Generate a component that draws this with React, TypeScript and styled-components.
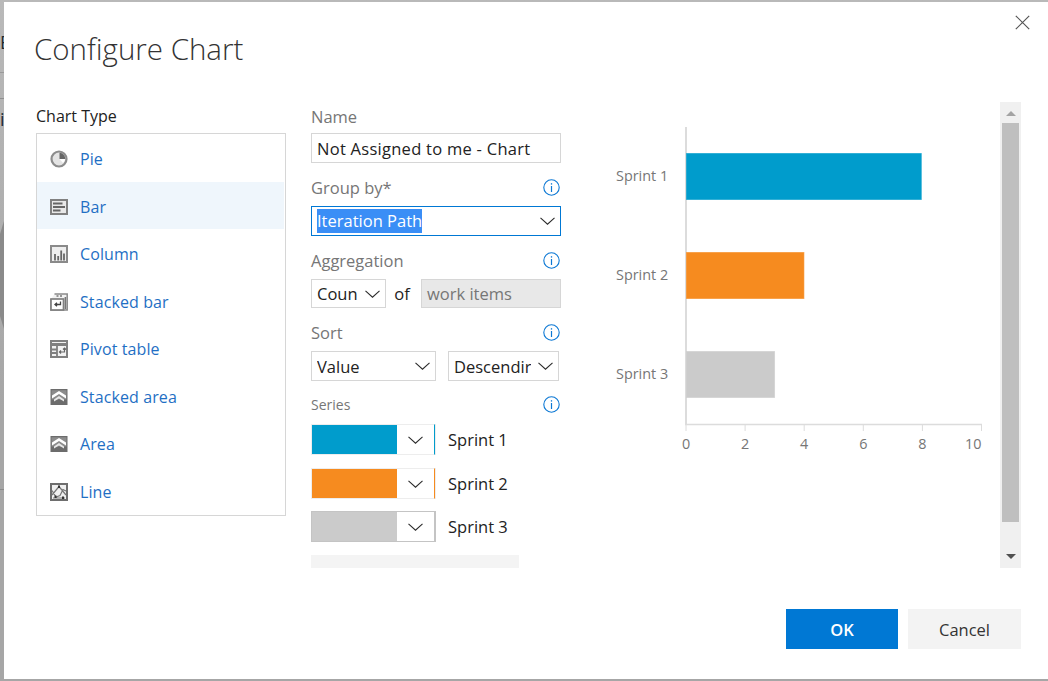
import React from 'react';
import styled, { createGlobalStyle } from 'styled-components';

const FONT = '"Open Sans", "Noto Sans", "Liberation Sans", sans-serif';

const GlobalStyle = createGlobalStyle`
	html, body {
		margin: 0;
		padding: 0;
		background: #a8a8a8;
		overflow: hidden;
	}
	* {
		box-sizing: border-box;
	}
`;

const Page = styled.div`
	display: flex;
	width: 1048px;
	height: 681px;
	font-family: ${FONT};
	background: linear-gradient(#b9b9b9, #a6a6a6 60%);
`;

const BackdropStrip = styled.div`
	display: flex;
	flex-direction: column;
	flex: 0 0 4px;
	overflow: hidden;
	background:
		linear-gradient(#9a9a9a, #9a9a9a) 0 72px / 100% 1px no-repeat,
		linear-gradient(#8f8f8f, #8f8f8f) 0 98px / 100% 1px no-repeat,
		linear-gradient(#8a8a8a, #8a8a8a) 0 489px / 100% 1px no-repeat;
`;

const BackdropGlyph = styled.span<{ $top: number }>`
	display: block;
	margin-top: ${(p) => p.$top}px;
	height: 18px;
	font-size: 18px;
	line-height: 18px;
	white-space: nowrap;
	color: #1d2a33;
`;

const BackdropPatch = styled.div`
	margin-top: 93px;
	height: 108px;
	background: #8a8a8a;
	clip-path: polygon(100% 0, 100% 100%, 0 88%, 0 12%);
`;

const Dialog = styled.div`
	position: relative;
	flex: 1;
	display: flex;
	flex-direction: column;
	margin: 2px 0 2px;
	background: #fff;
	color: #222;
`;

const CloseButton = styled.button`
	position: absolute;
	top: 13px;
	right: 18px;
	display: flex;
	padding: 0;
	border: 0;
	background: none;
`;

const Title = styled.h1`
	height: 100px;
	margin: 0;
	padding: 25px 0 0 30px;
	font-size: 29.5px;
	line-height: 44px;
	font-weight: 300;
	color: #333;
`;

const Body = styled.div`
	display: flex;
	height: 466px;
	padding: 0 27px 0 32px;
`;

const TypeColumn = styled.div`
	flex: 0 0 250px;
	margin-right: 25px;
`;

const TypeLabel = styled.div`
	height: 31px;
	font-size: 16px;
	line-height: 28px;
	color: #222;
`;

const TypeList = styled.div`
	display: grid;
	grid-template-rows: repeat(8, 47.5px);
	height: 383px;
	padding: 0 1px 0 0;
	border: 1px solid #d6d6d6;
`;

const TypeItem = styled.div<{ $selected?: boolean }>`
	display: flex;
	align-items: center;
	padding: 3px 0 0 13px;
	gap: 12px;
	font-size: 16px;
	letter-spacing: 0.1px;
	color: #1f6fc4;
	background: ${(p) => (p.$selected ? '#eff6fc' : 'transparent')};
`;

const FormColumn = styled.div`
	display: flex;
	flex-direction: column;
	flex: 0 0 250px;
`;

const FieldHead = styled.div<{ $height: number; $shift: number }>`
	display: flex;
	align-items: center;
	justify-content: space-between;
	height: ${(p) => p.$height}px;
	padding: ${(p) => (p.$shift > 0 ? p.$shift : 0)}px 1px ${(p) => (p.$shift < 0 ? -p.$shift : 0)}px 0;
	font-size: 16.5px;
	color: #767676;
`;

const SeriesHead = styled(FieldHead)`
	font-size: 14px;
`;

const TextField = styled.div<{ $disabled?: boolean; $spacing?: number }>`
	display: flex;
	align-items: center;
	flex: 1;
	height: 100%;
	min-width: 0;
	padding-left: 5px;
	border: 1px solid #d6d6d6;
	font-size: 16.5px;
	letter-spacing: ${(p) => p.$spacing ?? 0}px;
	white-space: nowrap;
	color: ${(p) => (p.$disabled ? '#767676' : '#222')};
	background: ${(p) => (p.$disabled ? '#e8e8e8' : '#fff')};
`;

const FieldRow = styled.div`
	display: flex;
	align-items: center;
	height: 30px;
`;

const AggregationRow = styled(FieldRow)`
	height: 29px;
`;

const SortRow = styled(FieldRow)`
	gap: 12px;
`;

const Dropdown = styled.div<{ $width?: number; $focused?: boolean }>`
	display: flex;
	align-items: center;
	justify-content: space-between;
	flex: ${(p) => (p.$width ? `0 0 ${p.$width}px` : '1')};
	height: 100%;
	min-width: 0;
	padding: 0 5px 0 5px;
	border: 1px solid ${(p) => (p.$focused ? '#0078d4' : '#d6d6d6')};
	font-size: 16.5px;
	white-space: nowrap;
	color: #222;
`;

const DropdownValue = styled.span`
	min-width: 0;
	overflow: hidden;
`;

const SelectedText = styled.span`
	display: inline-block;
	line-height: 24px;
	color: #fff;
	background: #3a8ef6;
`;

const OfLabel = styled.span`
	flex: 0 0 35px;
	padding-right: 3px;
	font-size: 16.5px;
	text-align: center;
	color: #222;
`;

const SeriesRow = styled.div<{ $gap: number }>`
	display: flex;
	align-items: center;
	height: 31px;
	margin-bottom: ${(p) => p.$gap}px;
	font-size: 16.5px;
	line-height: 29px;
	color: #222;
`;

const ColorPicker = styled.div<{ $color: string; $dark?: boolean }>`
	display: flex;
	flex: 0 0 124px;
	height: 100%;
	margin-right: 13px;
	border: ${(p) => (p.$dark ? '1px solid #c4c4c4' : '1px solid #ededed')};
	border-right: 1px solid ${(p) => p.$color};
	box-shadow: 1px 0 0 ${(p) => (p.$dark ? '#c4c4c4' : '#ededed')};
`;

const ColorSwatch = styled.div<{ $color: string }>`
	flex: 0 0 85px;
	background: ${(p) => p.$color};
`;

const ColorArrow = styled.div`
	display: flex;
	align-items: center;
	justify-content: center;
	flex: 1;
	background: #fff;
`;

const ClippedField = styled.div`
	width: 208px;
	height: 13px;
	background: #f4f4f4;
`;

const ChartArea = styled.div`
	flex: 0 0 400px;
	margin-left: 39px;
`;

const AxisLabel = styled.text`
	font-family: ${FONT};
	font-size: 14.4px;
	fill: #767676;
`;

const ScrollTrack = styled.div`
	display: flex;
	flex-direction: column;
	align-items: center;
	flex: 0 0 21px;
	background: #f0f0f0;
`;

const ScrollArrow = styled.div<{ $up?: boolean }>`
	display: flex;
	align-items: ${(p) => (p.$up ? 'center' : 'flex-end')};
	justify-content: center;
	flex: ${(p) => (p.$up ? '0 0 21px' : '1')};
	padding: ${(p) => (p.$up ? '2px 0 0' : '0 0 9px')};
	&::before {
		content: '';
		border-left: 5px solid transparent;
		border-right: 5px solid transparent;
		${(p) =>
			p.$up
				? 'border-bottom: 5px solid #a3a3a3;'
				: 'border-top: 5px solid #505050;'}
	}
`;

const ScrollThumb = styled.div`
	flex: 0 0 399px;
	width: 17px;
	background: #bfbfbf;
`;

const Footer = styled.div`
	display: flex;
	justify-content: flex-end;
	gap: 10px;
	padding: 41px 27px 0 0;
`;

const ActionButton = styled.button<{ $primary?: boolean }>`
	width: ${(p) => (p.$primary ? 112 : 113)}px;
	height: 40px;
	padding: 0;
	border: 0;
	font-family: ${FONT};
	font-size: 16.5px;
	font-weight: ${(p) => (p.$primary ? 600 : 400)};
	color: ${(p) => (p.$primary ? '#fff' : '#333')};
	background: ${(p) => (p.$primary ? '#0078d4' : '#f3f3f3')};
`;

const Chevron = () => (
	<svg width="15" height="8" viewBox="0 0 15 8" fill="none">
		<path d="M.5.8 7.5 7.2 14.5.8" stroke="#2b2b2b" strokeWidth="1.1" />
	</svg>
);

const InfoIcon = () => (
	<svg width="17" height="17" viewBox="0 0 17 17" fill="none">
		<circle cx="8.5" cy="8.5" r="7.7" stroke="#0c78d4" strokeWidth="1.1" />
		<path d="M8.5 7v6" stroke="#0c78d4" strokeWidth="1.2" />
		<path d="M8.5 4.2v1.4" stroke="#0c78d4" strokeWidth="1.3" />
	</svg>
);

const AREA_ICON = (
	<>
		<rect x=".5" y="1" width="17" height="16" fill="#6c6c6c" />
		<path d="M1.5 2.2h15v9.3H1.5Z" fill="#8c8c8c" />
		<path d="M2 7.5 9 3l7 4.5v3L9 6 2 10.500Z" fill="#fff" />
		<path d="M4 11.500 9 8l5 3.500v2L9 10.500 4 13.500Z" fill="#e8e8e8" />
	</>
);

const CHART_ICONS: Record<string, React.ReactNode> = {
	Pie: (
		<>
			<circle cx="9" cy="9" r="7.5" fill="#e4e4e4" stroke="#8c8c8c" strokeWidth="2.2" />
			<path d="M9.5 9V2.8a6.2 6.2 0 0 1 5.8 6.2Z" fill="#666" />
			<path d="M9.5 9h5.500a6 6 0 0 1-2 4Z" fill="#fff" />
		</>
	),
	Bar: (
		<>
			<rect x="1" y="2" width="16" height="14" fill="#e8e8e8" stroke="#808080" strokeWidth="2" />
			<path d="M3 5.5h9.5M3 9h12M3 12.5h7.5" stroke="#666" strokeWidth="2" />
		</>
	),
	Column: (
		<>
			<rect x="1" y="1" width="16" height="16" fill="#eee" stroke="#8a8a8a" strokeWidth="2" />
			<path d="M5 15.5V9M8.2 15.5V11M11.2 15.5V5.5M14 15.5V8.5" stroke="#666" strokeWidth="1.8" />
		</>
	),
	'Stacked bar': (
		<>
			<path d="M4.5 1h12.7v16H1V6" fill="#f2f2f2" stroke="#8a8a8a" strokeWidth="1.5" />
			<rect x="1" y="6" width="12.5" height="11" fill="#fff" stroke="#808080" strokeWidth="1.7" />
			<path d="M6.5 3h2M10 3h2M15.4 4v12" stroke="#777" strokeWidth="1.6" />
			<path d="M10.5 8.5v3H5M7 9.8 5 11.5 7 13.2" fill="none" stroke="#444" strokeWidth="1.3" />
		</>
	),
	'Pivot table': (
		<>
			<rect x="1" y="1" width="16" height="16" fill="#f2f2f2" stroke="#808080" strokeWidth="2" />
			<path d="M1 4.5h16" stroke="#808080" strokeWidth="3" />
			<path d="M7 4v12M2 9.5h5M2 13h5" stroke="#808080" strokeWidth="1.8" />
			<path d="M14.5 8v4H9.5M11 10.5 9.5 12 11 13.5M13 9.5 14.5 8 16 9.5" fill="none" stroke="#666" strokeWidth="1.2" />
		</>
	),
	'Stacked area': AREA_ICON,
	Area: AREA_ICON,
	Line: (
		<>
			<rect x="1" y="1" width="16" height="16" fill="#f0f0f0" stroke="#6e6e6e" strokeWidth="2" />
			<path d="M2 12 9 3.5 16 12M2 7.5l4 6.5 4-1.500 3-6 3 1.500M3 15h12" fill="none" stroke="#777" strokeWidth="1.2" />
			<path d="M9 2.5v2.500M5.500 12.500v2.500M13 13.500v2.500" stroke="#333" strokeWidth="2" />
		</>
	),
};

const CHART_TYPES = ['Pie', 'Bar', 'Column', 'Stacked bar', 'Pivot table', 'Stacked area', 'Area', 'Line'];

const SERIES = [
	{ name: 'Sprint 1', color: '#009ccc', gap: 13, value: 8 },
	{ name: 'Sprint 2', color: '#f68b1f', gap: 12, value: 4 },
	{ name: 'Sprint 3', color: '#cbcbcb', gap: 13, value: 3 },
];

const TICKS = [0, 2, 4, 6, 8, 10];

const BarChart = () => (
	<svg width="400" height="466" viewBox="600 102 400 466">
		<path d="M686 127v297" stroke="#dcdcdc" strokeWidth="2" />
		<path d="M685 424.5h297" stroke="#dcdcdc" strokeWidth="1.5" />
		{TICKS.map((tick) => (
			<React.Fragment key={tick}>
				<path d={`M${686 + tick * 29.55} 424v7`} stroke="#dcdcdc" />
				<AxisLabel x={686 + tick * 29.55} y={449} textAnchor={tick === 10 ? 'end' : 'middle'}>
					{tick}
				</AxisLabel>
			</React.Fragment>
		))}
		{SERIES.map((series, index) => {
			const top = 153.5 + index * 99;
			return (
				<React.Fragment key={series.name}>
					<rect x={686.5} y={top} width={series.value * 29.35} height={46} fill={series.color} stroke={series.color} strokeOpacity={0.6} />
					<AxisLabel x={616} y={top + 27.5}>
						{series.name}
					</AxisLabel>
				</React.Fragment>
			);
		})}
	</svg>
);

const App = () => (
	<Page>
		<GlobalStyle />
		<BackdropStrip>
			<BackdropGlyph $top={33}>E</BackdropGlyph>
			<BackdropGlyph $top={59}>i</BackdropGlyph>
			<BackdropPatch />
		</BackdropStrip>
		<Dialog>
			<CloseButton aria-label="Close">
				<svg width="15" height="15" viewBox="0 0 15 15" fill="none">
					<path d="M.8.8 14.2 14.2M14.2.8.8 14.2" stroke="#555" strokeWidth="1.2" />
				</svg>
			</CloseButton>
			<Title>Configure Chart</Title>
			<Body>
				<TypeColumn>
					<TypeLabel>Chart Type</TypeLabel>
					<TypeList>
						{CHART_TYPES.map((type) => (
							<TypeItem key={type} $selected={type === 'Bar'}>
								<svg width="18" height="18" viewBox="0 0 18 18">
									{CHART_ICONS[type]}
								</svg>
								{type}
							</TypeItem>
						))}
					</TypeList>
				</TypeColumn>
				<FormColumn>
					<FieldHead $height={31} $shift={-3}>Name</FieldHead>
					<FieldRow>
						<TextField $spacing={0.27}>Not Assigned to me - Chart</TextField>
					</FieldRow>
					<FieldHead $height={43} $shift={6}>
						Group by*
						<InfoIcon />
					</FieldHead>
					<FieldRow>
						<Dropdown $focused>
							<SelectedText>Iteration Path</SelectedText>
							<Chevron />
						</Dropdown>
					</FieldRow>
					<FieldHead $height={43} $shift={6}>
						Aggregation
						<InfoIcon />
					</FieldHead>
					<AggregationRow>
						<Dropdown $width={75}>
							<DropdownValue>Coun</DropdownValue>
							<Chevron />
						</Dropdown>
						<OfLabel>of</OfLabel>
						<TextField $disabled>work items</TextField>
					</AggregationRow>
					<FieldHead $height={43} $shift={5}>
						Sort
						<InfoIcon />
					</FieldHead>
					<SortRow>
						<Dropdown $width={125}>
							<DropdownValue>Value</DropdownValue>
							<Chevron />
						</Dropdown>
						<Dropdown $width={111}>
							<DropdownValue>Descendir</DropdownValue>
							<Chevron />
						</Dropdown>
					</SortRow>
					<SeriesHead $height={43} $shift={4}>
						Series
						<InfoIcon />
					</SeriesHead>
					{SERIES.map((series, index) => (
						<SeriesRow key={series.name} $gap={series.gap}>
							<ColorPicker $color={index === 2 ? '#c4c4c4' : series.color} $dark={index === 2}>
								<ColorSwatch $color={series.color} />
								<ColorArrow>
									<Chevron />
								</ColorArrow>
							</ColorPicker>
							{series.name}
						</SeriesRow>
					))}
					<ClippedField />
				</FormColumn>
				<ChartArea>
					<BarChart />
				</ChartArea>
				<ScrollTrack>
					<ScrollArrow $up />
					<ScrollThumb />
					<ScrollArrow />
				</ScrollTrack>
			</Body>
			<Footer>
				<ActionButton $primary>OK</ActionButton>
				<ActionButton>Cancel</ActionButton>
			</Footer>
		</Dialog>
	</Page>
);

export default App;
